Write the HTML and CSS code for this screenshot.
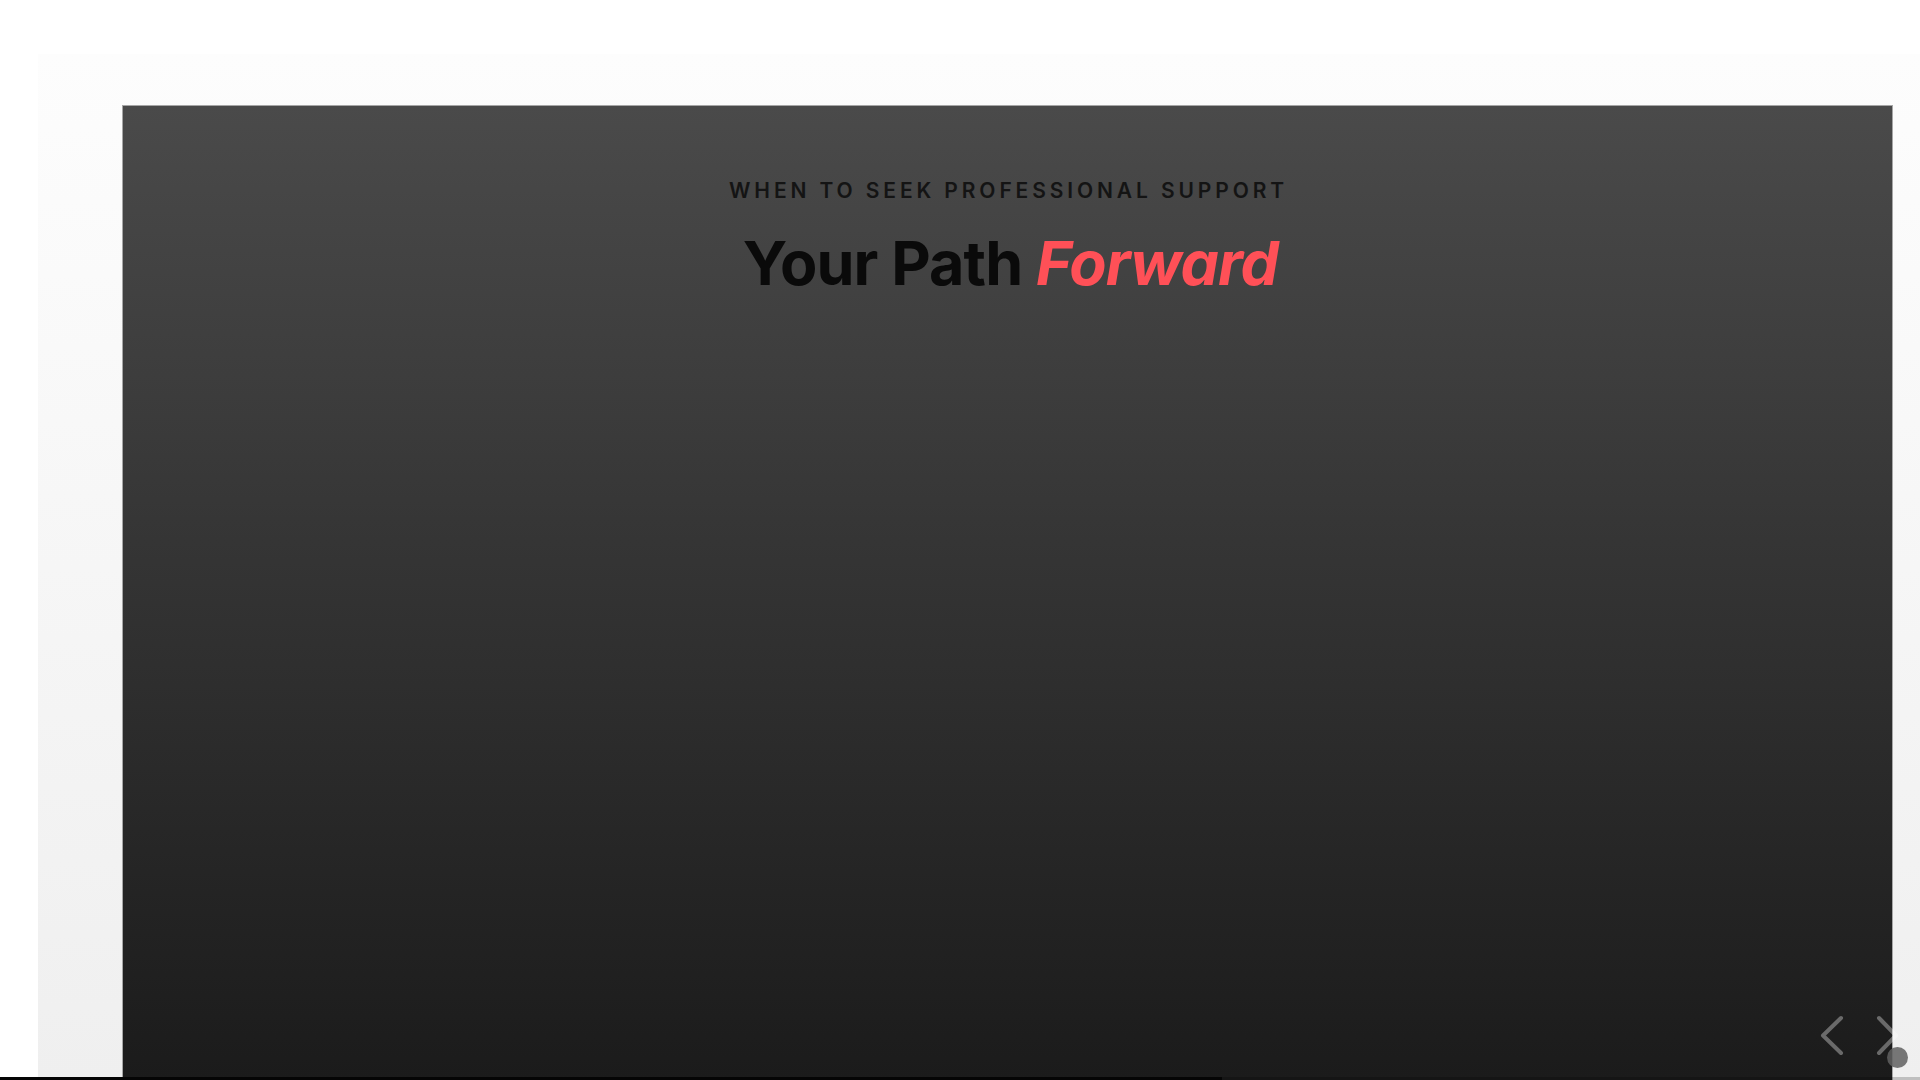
FILE: index.html
```html
<!DOCTYPE html>
<html lang="en">
<head>
<meta charset="utf-8">
<title>Your Path Forward</title>
<link rel="stylesheet" href="styles.css">
</head>
<body>
<div class="page">
  <section class="panel">
    <div class="card">
      <header class="card-head">
        <p class="eyebrow">When to seek professional support</p>
        <h1 class="title">Your Path <em class="accent">Forward</em></h1>
      </header>
    </div>
  </section>
</div>

<button class="nav nav-prev" aria-label="Previous">
  <svg width="26" height="44" viewBox="0 0 26 44"><polyline points="21,4 3,21.5 21,39" fill="none" stroke="currentColor" stroke-width="4" stroke-linecap="round" stroke-linejoin="round"/></svg>
</button>
<button class="nav nav-next" aria-label="Next">
  <svg width="26" height="44" viewBox="0 0 26 44"><polyline points="5,4 22,21.5 5,39" fill="none" stroke="currentColor" stroke-width="4" stroke-linecap="round" stroke-linejoin="round"/></svg>
</button>
<span class="dot"></span>
<div class="progress"><div class="progress-fill" style="width:63.65%"></div></div>
</body>
</html>
```

FILE: styles.css
```css
html, body {
  margin: 0;
  padding: 0;
  height: 1080px;
  overflow: hidden;
  background: #ffffff;
  font-family: Inter, "Noto Sans", "Liberation Sans", sans-serif;
}

.page {
  padding: 54px 0 0 38px;
}

.panel {
  height: 1040px;
  box-sizing: border-box;
  padding: 51px 27px 0 84px;
  background: linear-gradient(to bottom, #fdfdfd 0px, #efefef 1026px, #eeeeee 1040px);
  overflow: hidden;
}

.card {
  height: 990px;
  box-sizing: border-box;
  border: 1px solid #a6a6a6;
  background: linear-gradient(to bottom, #4a4a4a 0px, #1b1b1b 972px);
}

.card-head {
  padding-top: 73px;
  text-align: center;
}

.eyebrow {
  margin: 0;
  font-size: 21px;
  line-height: 24px;
  font-weight: 600;
  letter-spacing: 0.185em;
  text-transform: uppercase;
  color: #141414;
  padding-left: 0.1em;
}

.title {
  margin: 27px 0 0;
  padding-left: 6px;
  font-size: 61px;
  line-height: 66px;
  font-weight: 700;
  letter-spacing: -0.014em;
  color: #0a0a0a;
}

.accent {
  font-style: italic;
  color: #ff5057;
}

.nav {
  position: absolute;
  top: 1014px;
  width: 26px;
  height: 44px;
  padding: 0;
  border: 0;
  background: transparent;
  color: rgba(255, 255, 255, 0.34);
}
.nav svg { display: block; }
.nav-prev { left: 1820px; }
.nav-next { left: 1874px; }

.dot {
  position: absolute;
  left: 1887px;
  top: 1047px;
  width: 21px;
  height: 21px;
  border-radius: 50%;
  background: rgba(96, 96, 96, 0.85);
}

.progress {
  position: absolute;
  left: 0;
  top: 1077px;
  width: 1920px;
  height: 3px;
  background: rgba(0, 0, 0, 0.2);
}
.progress-fill {
  height: 100%;
  background: #050505;
}
```
